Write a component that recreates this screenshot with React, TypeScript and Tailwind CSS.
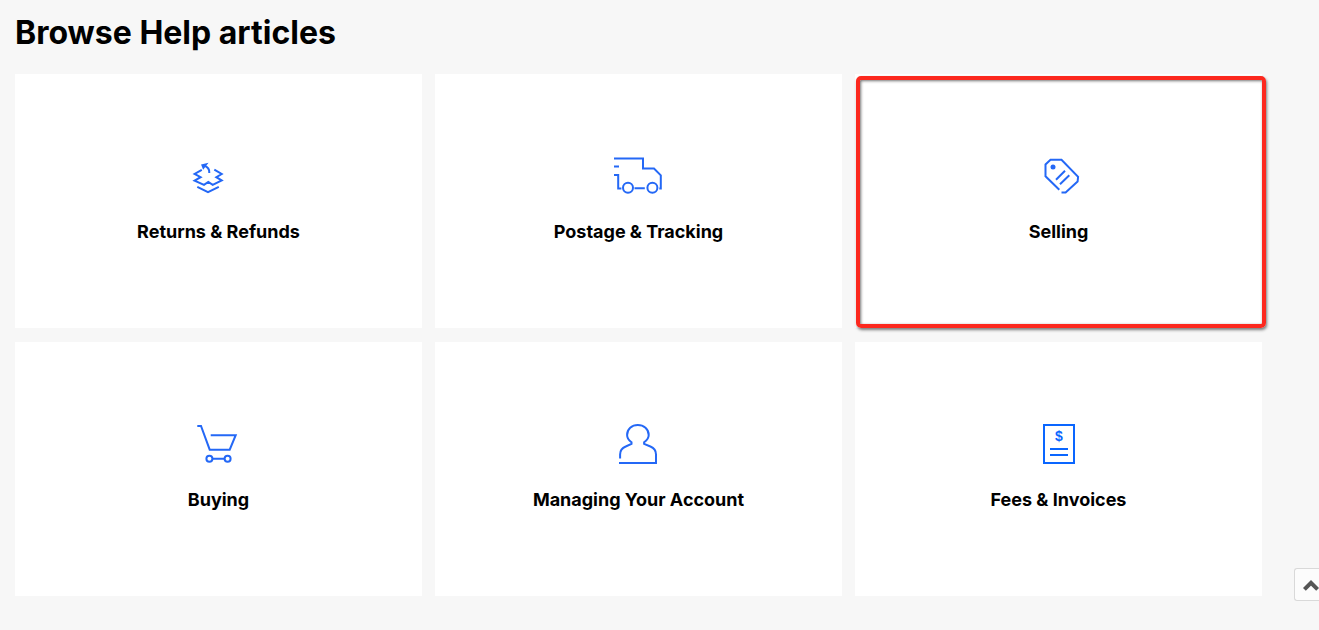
import React from 'react';

interface Topic {
  title: string;
  icon: React.ReactNode;
  highlighted?: boolean;
}

interface IconProps {
  color?: string;
  children: React.ReactNode;
}

const TopicIcon: React.FC<IconProps> = ({ color = '#2468f6', children }) => (
  <svg
    className="w-[61px] h-[60px]"
    viewBox="0 0 61 60"
    fill="none"
    stroke={color}
    strokeWidth="2"
    aria-hidden="true"
  >
    {children}
  </svg>
);

const topics: Topic[] = [
  {
    title: 'Returns & Refunds',
    icon: (
      <TopicIcon>
        <path d="M13.8 24.8L6.6 29l6 3.2-6 3.4L16 39.8l4.3-2.8 4.4 2.8 9-4.4-5.4-3.2 5.4-3.2-7.4-4.3" />
        <path d="M9.3 41.8L20 47.2l10.8-5.4" />
        <path d="M21.3 28c.3-3.6-1.6-6.2-5.3-7.5" />
        <path d="M14.4 20.2l3.6-.9-2.6 3.4z" />
      </TopicIcon>
    ),
  },
  {
    title: 'Postage & Tracking',
    icon: (
      <TopicIcon>
        <path d="M6 13.5h29v10h11l6.8 6.8v13.2h-1.5M6 21.5h5M6 30h4.2v13.5h3.2M26.5 43.3h10.3" />
        <circle cx="20" cy="42.7" r="5" />
        <circle cx="44.4" cy="42.7" r="5" />
      </TopicIcon>
    ),
  },
  {
    title: 'Selling',
    highlighted: true,
    icon: (
      <TopicIcon>
        <path d="M31.3 44.7L17.5 31.3V19.5l5-4.7h11l16.6 17-.5 4.7-12 11.1h-4.1M28 34.7l9-9M32 39.2l9.3-8.9" />
        <circle cx="25" cy="22" r="2.5" fill="#2468f6" stroke="none" />
      </TopicIcon>
    ),
  },
  {
    title: 'Buying',
    icon: (
      <TopicIcon>
        <path d="M9.3 13H13l8.7 23.7h20l6-14.5h-25M25 45.7h11" />
        <circle cx="21.4" cy="45.8" r="3" />
        <circle cx="39.6" cy="45.8" r="3" />
      </TopicIcon>
    ),
  },
  {
    title: 'Managing Your Account',
    icon: (
      <TopicIcon>
        <path d="M11 50h37V41.5c0-4.3-2-6.6-5.6-8l-6.3-2.6v-1.6c2.7-1.9 4.6-4.2 4.6-7.3 0-6-4.9-10-10.9-10s-10.7 4-10.7 10c0 3.1 1.7 5.4 4.4 7.3v1.6L17.7 33.5c-3.6 1.4-5.6 3.7-5.6 8v4" />
      </TopicIcon>
    ),
  },
  {
    title: 'Fees & Invoices',
    icon: (
      <TopicIcon color="#0a66ff">
        <path d="M16 12h30v38H16zM22 36h18M22 42h18" />
        <text
          x="31"
          y="28"
          fill="#0a66ff"
          stroke="none"
          textAnchor="middle"
          className="font-['Liberation_Sans'] text-[14px] font-bold"
        >
          $
        </text>
      </TopicIcon>
    ),
  },
];

const TopicCard: React.FC<{ topic: Topic }> = ({ topic }) => (
  <a href="#" className="relative flex flex-col items-center gap-[15px] bg-white h-[254px] pt-[71px]">
    {topic.icon}
    <span className="text-[18px] leading-6 font-bold">{topic.title}</span>

    {/* Marker frame */}
    {topic.highlighted && (
      <span className="absolute left-px -right-1 top-0.5 bottom-0 rounded-[5px] border-4 border-[#fc281e] shadow-[1px_2px_3px_rgba(0,0,0,0.5),inset_1px_1px_3px_rgba(0,0,0,0.55)]" />
    )}
  </a>
);

export default function App() {
  return (
    <main className="min-h-screen bg-[#f7f7f7] pl-[15px] pr-[57px] pt-[11px] pb-8 text-black font-['Inter',sans-serif]">
      <h1 className="text-[32px] leading-[44px] font-bold">Browse Help articles</h1>

      {/* Topics */}
      <div className="mt-[19px] grid grid-cols-3 gap-x-[13px] gap-y-[14px]">
        {topics.map((topic) => (
          <TopicCard key={topic.title} topic={topic} />
        ))}
      </div>

      {/* Back to top */}
      <button
        type="button"
        aria-label="Back to top"
        className="fixed right-0 bottom-[29px] w-[25px] h-[33px] overflow-hidden rounded-l-[3px] border border-r-0 border-[#d9d9d9] bg-[#fcfcfc] pl-2 text-[#555]"
      >
        <svg width="16" height="12" viewBox="0 0 16 12" fill="none" stroke="currentColor" strokeWidth="4" aria-hidden="true">
          <path d="M1.4 10.4L8 3.8l6.6 6.6" />
        </svg>
      </button>
    </main>
  );
}
